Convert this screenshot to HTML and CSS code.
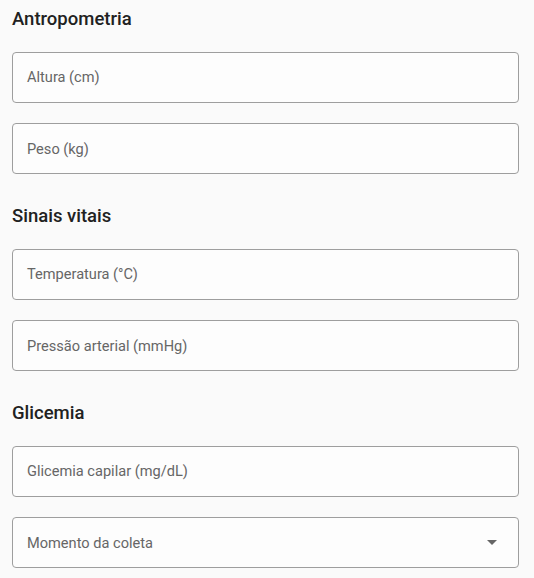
FILE: index.html
```html
<!DOCTYPE html>
<html lang="pt">
<head>
<meta charset="utf-8">
<link rel="stylesheet" href="styles.css">
</head>
<body>
<div class="page">
  <section class="section">
    <h2 class="heading">Antropometria</h2>
    <div class="field"><span class="label">Altura (cm)</span></div>
    <div class="field"><span class="label">Peso (kg)</span></div>
  </section>
  <section class="section">
    <h2 class="heading">Sinais vitais</h2>
    <div class="field"><span class="label">Temperatura (°C)</span></div>
    <div class="field"><span class="label">Pressão arterial (mmHg)</span></div>
  </section>
  <section class="section">
    <h2 class="heading">Glicemia</h2>
    <div class="field"><span class="label">Glicemia capilar (mg/dL)</span></div>
    <div class="field select"><span class="label">Momento da coleta</span>
      <svg class="arrow" width="10" height="5" viewBox="0 0 10 5"><path d="M0 0h10L5 5z" fill="#666"/></svg>
    </div>
  </section>
</div>
</body>
</html>
```
FILE: styles.css
```css
html, body {
  margin: 0;
  background: #fafafa;
}
body {
  font-family: Roboto, "Noto Sans", sans-serif;
}
.page {
  padding: 7px 15px 0 12px;
  display: flex;
  flex-direction: column;
  gap: 30px;
}
.section {
  display: flex;
  flex-direction: column;
  gap: 20.5px;
}
.heading {
  margin: 0;
  font-size: 18.5px;
  line-height: 24px;
  font-weight: 500;
  color: #212121;
}
.field {
  height: 51px;
  box-sizing: border-box;
  border: 1px solid #9e9e9e;
  border-radius: 4px;
  background: #fdfdfd;
  display: flex;
  align-items: center;
  padding: 0 14px;
}
.label {
  font-size: 14.6px;
  color: #666;
  flex: 1;
}
.arrow {
  margin-right: 7px;
}
```
